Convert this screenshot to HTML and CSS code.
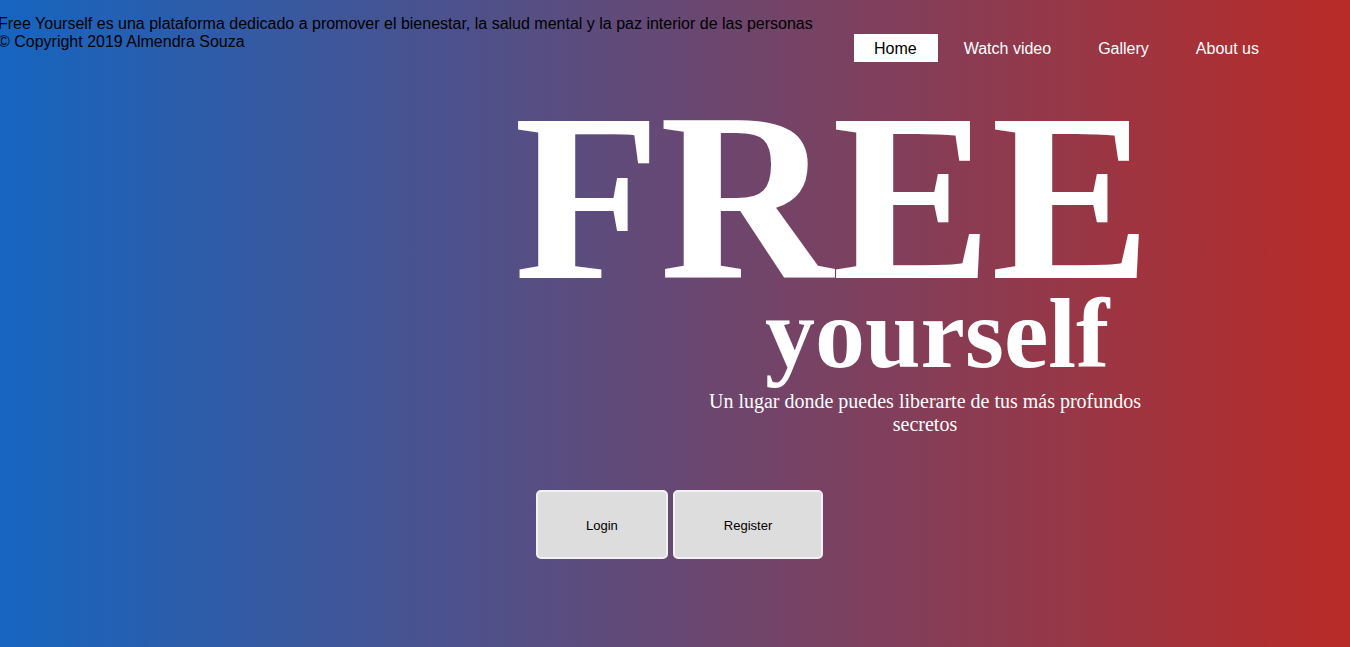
FILE: index.html
```html
<!DOCTYPE html>
<html lang="es">
<head>
<meta charset="utf-8">
<title>Free Yourself</title>
<link rel="stylesheet" href="styles.css">
</head>
<body>
<header class="top">
  <div class="about">
    <p>Free Yourself es una plataforma dedicado a promover el bienestar, la salud mental y la paz interior de las personas</p>
    <p>© Copyright 2019 Almendra Souza</p>
  </div>
  <nav class="nav">
    <a class="nav-link active" href="#">Home</a>
    <a class="nav-link" href="#">Watch video</a>
    <a class="nav-link" href="#">Gallery</a>
    <a class="nav-link" href="#">About us</a>
  </nav>
</header>
<main class="hero">
  <h1 class="title">FREE</h1>
  <h2 class="subtitle">yourself</h2>
  <p class="tagline">Un lugar donde puedes liberarte de tus más profundos secretos</p>
  <div class="actions">
    <button class="btn btn-login">Login</button>
    <button class="btn btn-register">Register</button>
  </div>
</main>
</body>
</html>
```
FILE: styles.css
```css
html, body {
  margin: 0;
  padding: 0;
  height: 100%;
}
body {
  background: linear-gradient(to right, #1565c0, #b92b27);
  font-family: "Liberation Sans", Arial, sans-serif;
  overflow: hidden;
}
.top {
  display: flex;
  justify-content: space-between;
  align-items: flex-start;
  height: 62px;
}
.about {
  padding-top: 15px;
  margin-left: -2px;
  color: #000;
  font-size: 16px;
  line-height: 18px;
}
.about p {
  margin: 0;
  white-space: nowrap;
}
.nav {
  display: flex;
  gap: 5px;
  margin-top: 34px;
  margin-right: 70px;
}
.nav-link {
  display: block;
  padding: 6px 21px 4px;
  font-size: 16px;
  line-height: 18px;
  color: #fff;
  text-decoration: none;
}
.nav-link.active {
  background: #fff;
  color: #000;
  padding-left: 20px;
  padding-right: 21px;
}
.hero {
  display: flex;
  flex-direction: column;
  align-items: flex-start;
  margin-top: 35px;
}
.title {
  margin: 0 0 0 514px;
  font-family: "Liberation Serif", "Times New Roman", serif;
  font-weight: bold;
  font-size: 240px;
  line-height: 200px;
  letter-spacing: -1px;
  color: #fff;
}
.subtitle {
  margin: 2px 0 0 765px;
  font-family: "Liberation Serif", "Times New Roman", serif;
  font-weight: bold;
  font-size: 100px;
  line-height: 70px;
  color: #fff;
}
.tagline {
  margin: 21px 0 0 695px;
  width: 460px;
  text-align: center;
  font-family: "Liberation Serif", "Times New Roman", serif;
  font-size: 20px;
  line-height: 23px;
  color: #fff;
}
.actions {
  display: flex;
  gap: 5px;
  margin: 54px 0 0 536px;
}
.btn {
  padding: 26px 48px 24px;
  font-family: "Liberation Sans", Arial, sans-serif;
  font-size: 13px;
  line-height: 15px;
  color: #000;
  background: #dddddd;
  border: 2px solid #f2f2f2;
  border-radius: 5px;
}
.btn-register {
  padding-left: 49px;
  padding-right: 49px;
}
```
